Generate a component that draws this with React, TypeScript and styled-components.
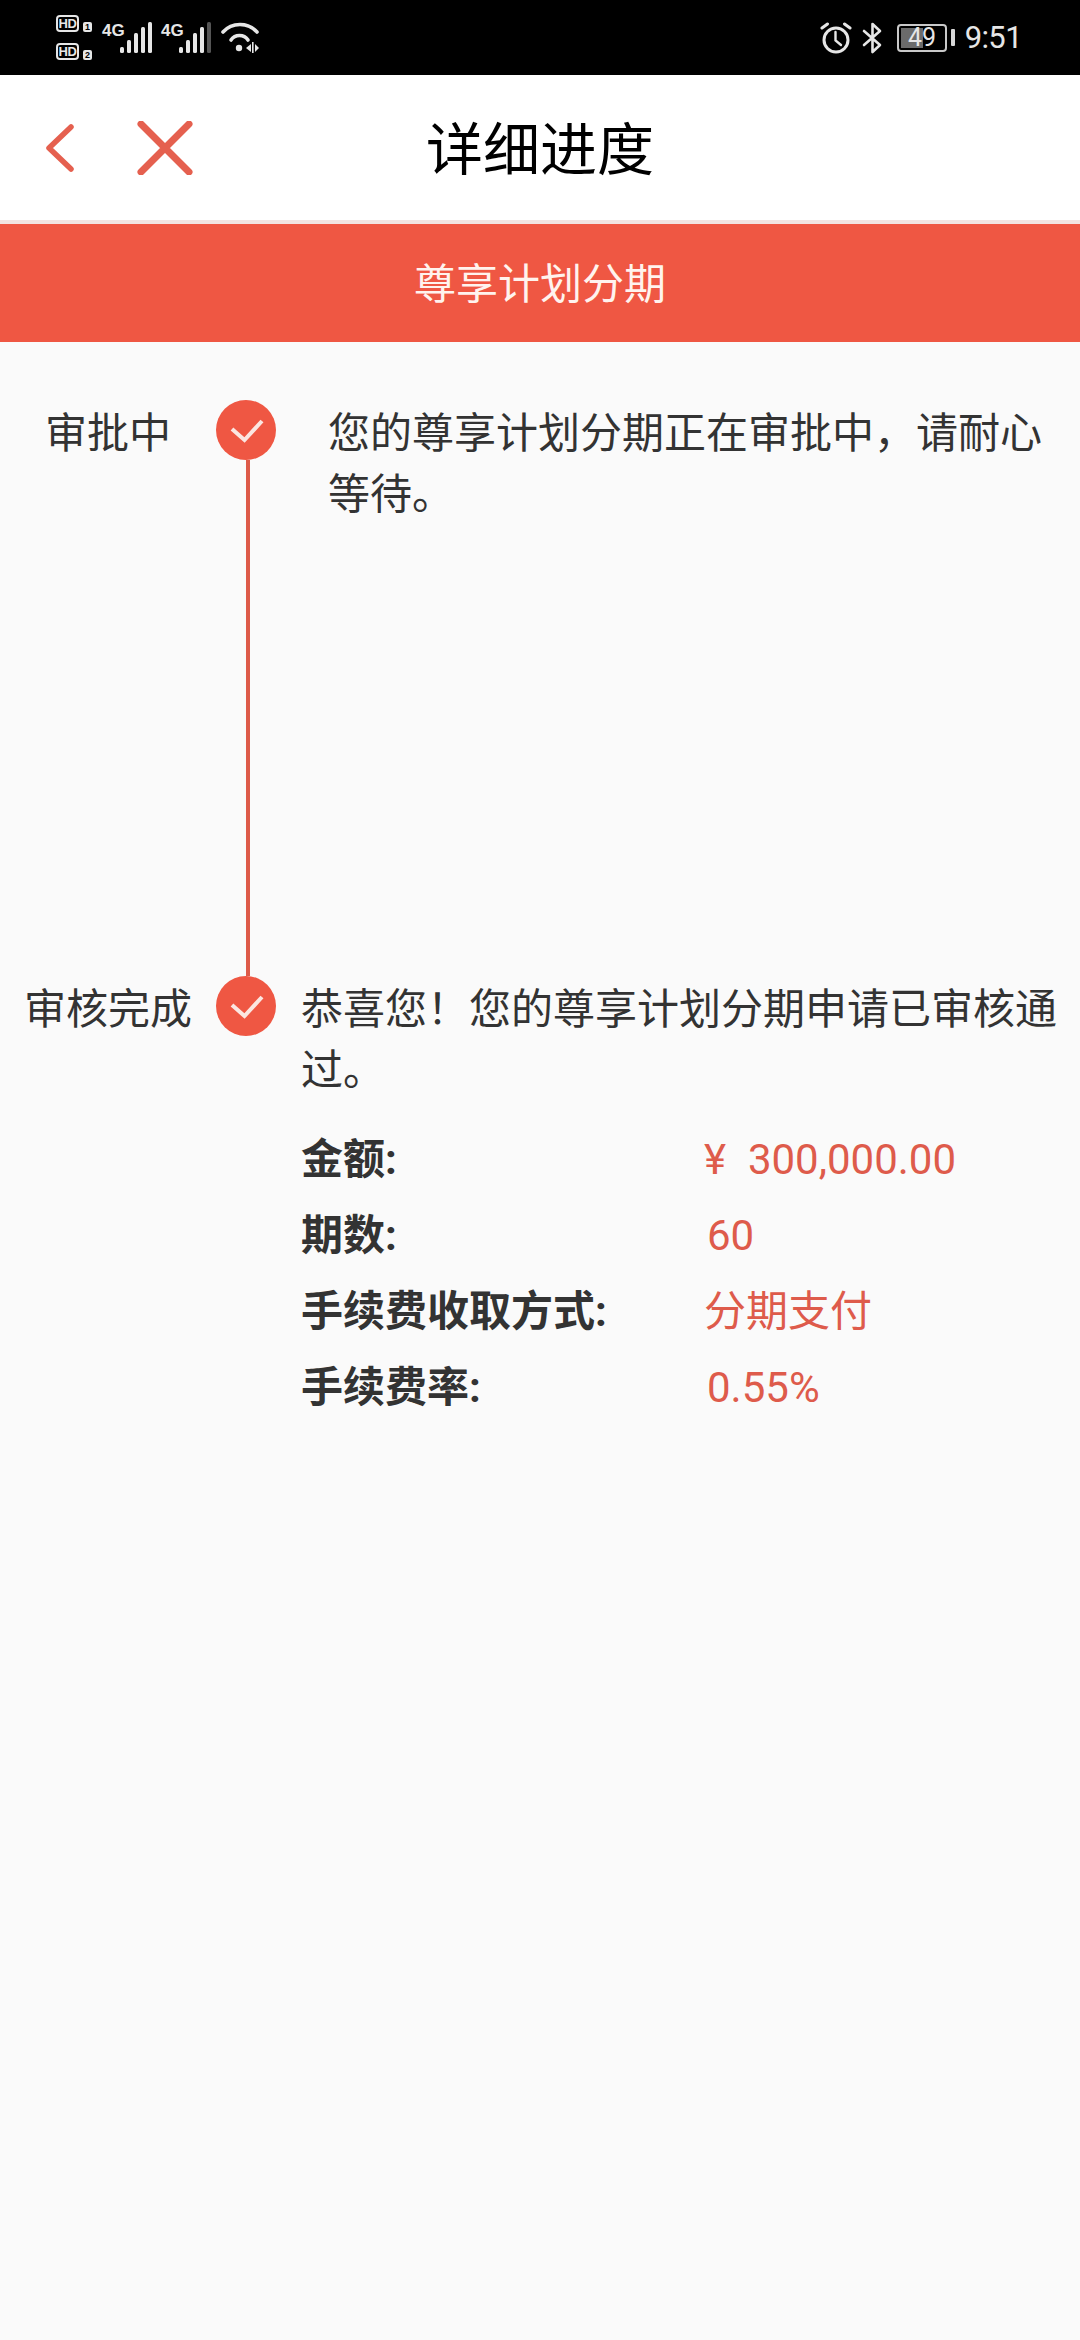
import React from "react";
import styled, { createGlobalStyle } from "styled-components";

const Global = createGlobalStyle`
  html, body { margin: 0; padding: 0; background: #fafafa; }
  body { font-family: Roboto, "Noto Sans CJK SC", sans-serif; }
  * { box-sizing: border-box; }
`;

const Page = styled.div`
  width: 1080px;
  height: 2340px;
  background: #fafafa;
  display: flex;
  flex-direction: column;
  overflow: hidden;
`;

const StatusBar = styled.div`
  height: 75px;
  background: #000;
  color: #e6e6e6;
  display: flex;
  align-items: center;
  justify-content: space-between;
  padding: 0 58px 0 56px;
`;

const StatusGroup = styled.div`
  display: flex;
  align-items: center;
`;

const SimStack = styled.div`
  display: flex;
  flex-direction: column;
  gap: 11px;
  margin-top: -1px;
`;

const SimRow = styled.div`
  display: flex;
  align-items: flex-end;
  gap: 4px;
`;

const HdBadge = styled.span`
  width: 23px;
  height: 17px;
  border: 2px solid #e6e6e6;
  border-radius: 4px;
  font: 700 13px/13px "Liberation Sans", sans-serif;
  letter-spacing: -0.5px;
  display: flex;
  align-items: center;
  justify-content: center;
`;

const SimNumber = styled.span`
  width: 9px;
  height: 10px;
  background: #e6e6e6;
  color: #000;
  border-radius: 2px;
  font: 700 9px/10px "Liberation Sans", sans-serif;
  text-align: center;
`;

const Network = styled.div<{ $gap: number }>`
  display: flex;
  align-items: flex-start;
  height: 32px;
  margin-left: ${(p) => p.$gap}px;
`;

const NetworkLabel = styled.span`
  width: 17px;
  font: 700 17px/17px "Liberation Sans Narrow", "Liberation Sans", sans-serif;
`;

const WifiIcon = styled.svg`
  margin-left: 9px;
  display: block;
`;

const AlarmIcon = styled.svg`
  display: block;
`;

const BluetoothIcon = styled.svg`
  display: block;
  margin-left: 10px;
`;

const Battery = styled.div`
  width: 50px;
  height: 28px;
  margin-left: 14px;
  border: 2px solid #c9c9c9;
  border-radius: 4px;
  position: relative;
  font: 400 25px/24px Roboto, sans-serif;
  text-align: center;
  padding-left: 1px;
`;

const BatteryFill = styled.span`
  position: absolute;
  left: 2px;
  top: 2px;
  bottom: 2px;
  width: 22px;
  background: #6b6b6b;
`;

const BatteryValue = styled.span`
  position: relative;
`;

const BatteryNub = styled.span`
  width: 4px;
  height: 17px;
  background: #d8d8d8;
  border-radius: 1px;
  margin-left: 4px;
`;

const Clock = styled.span`
  font: 400 31px/40px Roboto, sans-serif;
  margin-left: 10px;
  letter-spacing: -0.6px;
`;

const NavBar = styled.div`
  height: 145px;
  background: #fff;
  display: grid;
  grid-template-columns: 1fr auto 1fr;
  align-items: center;
`;

const NavIcons = styled.div`
  display: flex;
  align-items: center;
  gap: 61px;
  padding-left: 44px;
`;

const NavIcon = styled.svg`
  display: block;
  fill: none;
  stroke: #e5604f;
  stroke-linecap: round;
  stroke-linejoin: round;
`;

const NavTitle = styled.div`
  font-size: 57px;
  line-height: 70px;
  color: #000;
  text-align: center;
  font-weight: 400;
  padding-top: 6px;
`;

const Divider = styled.div`
  height: 4px;
  background: #f3e4e1;
`;

const Banner = styled.div`
  height: 118px;
  background: #ef5743;
  color: #fff3ee;
  font-size: 42px;
  display: flex;
  align-items: center;
  justify-content: center;
  padding-bottom: 5px;
`;

const Timeline = styled.div`
  padding-top: 58px;
  display: flex;
  flex-direction: column;
`;

const Step = styled.div<{ $height?: number }>`
  display: grid;
  grid-template-columns: 216px 60px 1fr;
  min-height: ${(p) => p.$height ?? 0}px;
`;

const StepLabel = styled.div`
  font-size: 42px;
  line-height: 61px;
  color: #333;
  text-align: center;
  padding-top: 3px;
  white-space: nowrap;
`;

const MarkerColumn = styled.div`
  display: flex;
  flex-direction: column;
  align-items: center;
`;

const Marker = styled.svg`
  display: block;
  flex: none;
`;

const Connector = styled.div`
  width: 4px;
  flex: 1;
  margin-left: 3px;
  background: #dd5a48;
`;

const StepBody = styled.div<{ $indent: number }>`
  padding-left: ${(p) => p.$indent}px;
  padding-top: 3px;
`;

const StepText = styled.div<{ $width: number }>`
  width: ${(p) => p.$width}px;
  font-size: 42px;
  line-height: 61px;
  color: #333;
`;

const Details = styled.div`
  margin-top: 21px;
`;

const DetailRow = styled.div`
  display: grid;
  grid-template-columns: 403px 1fr;
  height: 76px;
  align-items: center;
  font-size: 42px;
  line-height: 76px;
`;

const DetailLabel = styled.span`
  color: #333;
  font-weight: 700;
`;

const DetailValue = styled.span<{ $inset?: number }>`
  color: #de5b4b;
  padding-left: ${(p) => p.$inset ?? 0}px;
  word-spacing: 0.5px;
`;

const Signal = ({ weak }: { weak?: boolean }) => (
  <svg width="34" height="32" viewBox="0 0 34 32" style={{ display: "block" }}>
    {[
      [1, 25, 6],
      [8, 18, 13],
      [15, 11, 20],
      [22, 5, 26],
      [29, 0, 31],
    ].map(([x, y, h], i) => (
      <rect
        key={i}
        x={x}
        y={y}
        width="4"
        height={h}
        rx="1.5"
        fill={weak && i === 4 ? "#555" : "#e6e6e6"}
      />
    ))}
  </svg>
);

const Check = () => (
  <Marker width="60" height="60" viewBox="0 0 60 60">
    <circle cx="30" cy="30" r="30" fill="#ef5743" />
    <path
      d="M16 29 L28.5 40 L46 21"
      fill="none"
      stroke="#fbe6e1"
      strokeWidth="4"
    />
  </Marker>
);

export default function App() {
  return (
    <Page>
      <Global />
      <StatusBar>
        <StatusGroup>
          <SimStack>
            <SimRow>
              <HdBadge>HD</HdBadge>
              <SimNumber>1</SimNumber>
            </SimRow>
            <SimRow>
              <HdBadge>HD</HdBadge>
              <SimNumber>2</SimNumber>
            </SimRow>
          </SimStack>
          <Network $gap={10}>
            <NetworkLabel>4G</NetworkLabel>
            <Signal />
          </Network>
          <Network $gap={8}>
            <NetworkLabel>4G</NetworkLabel>
            <Signal weak />
          </Network>
          <WifiIcon width="38" height="32" viewBox="0 0 38 32" fill="none">
            <path d="M2 10 C11 0 27 0 36 10" stroke="#e6e6e6" strokeWidth="3.6" strokeLinecap="round" />
            <path d="M10 18 C14 12 23 12 27 18" stroke="#e6e6e6" strokeWidth="3.6" strokeLinecap="round" />
            <circle cx="18" cy="26" r="3.2" fill="#e6e6e6" />
            <path d="M30 22 L25 26 L30 30 Z" fill="#e6e6e6" />
            <rect x="31" y="20" width="1.6" height="11" fill="#e6e6e6" />
            <path d="M34 22 L38 26 L34 30 Z" fill="#e6e6e6" />
          </WifiIcon>
        </StatusGroup>
        <StatusGroup>
          <AlarmIcon width="32" height="32" viewBox="0 0 32 32" fill="none" stroke="#e6e6e6" strokeLinecap="round">
            <circle cx="16" cy="18" r="12" strokeWidth="3" />
            <path d="M15.5 10 V18.5 L21 23" strokeWidth="2.4" />
            <path d="M2 6 L7.5 2" strokeWidth="3" />
            <path d="M30 6 L24.5 2" strokeWidth="3" />
          </AlarmIcon>
          <BluetoothIcon width="21" height="32" viewBox="0 0 21 32" fill="none" stroke="#e6e6e6" strokeWidth="2.6" strokeLinejoin="round" strokeLinecap="round">
            <path d="M2 9 L18 23 L10.5 30 V2 L18 9 L2 23" />
          </BluetoothIcon>
          <Battery>
            <BatteryFill />
            <BatteryValue>49</BatteryValue>
          </Battery>
          <BatteryNub />
          <Clock>9:51</Clock>
        </StatusGroup>
      </StatusBar>

      <NavBar>
        <NavIcons>
          <NavIcon width="32" height="50" viewBox="0 0 32 50" strokeWidth="5.5">
            <path d="M27 4 L5 25 L27 46" />
          </NavIcon>
          <NavIcon width="56" height="54" viewBox="0 0 56 54" strokeWidth="7">
            <path d="M4 3 L52 51 M52 3 L4 51" />
          </NavIcon>
        </NavIcons>
        <NavTitle>详细进度</NavTitle>
      </NavBar>
      <Divider />
      <Banner>尊享计划分期</Banner>

      <Timeline>
        <Step $height={576}>
          <StepLabel>审批中</StepLabel>
          <MarkerColumn>
            <Check />
            <Connector />
          </MarkerColumn>
          <StepBody $indent={52}>
            <StepText $width={720}>您的尊享计划分期正在审批中，请耐心等待。</StepText>
          </StepBody>
        </Step>
        <Step>
          <StepLabel>审核完成</StepLabel>
          <MarkerColumn>
            <Check />
          </MarkerColumn>
          <StepBody $indent={25}>
            <StepText $width={760}>恭喜您！您的尊享计划分期申请已审核通过。</StepText>
            <Details>
              <DetailRow>
                <DetailLabel>金额:</DetailLabel>
                <DetailValue>¥&nbsp;&nbsp;300,000.00</DetailValue>
              </DetailRow>
              <DetailRow>
                <DetailLabel>期数:</DetailLabel>
                <DetailValue $inset={3}>60</DetailValue>
              </DetailRow>
              <DetailRow>
                <DetailLabel>手续费收取方式:</DetailLabel>
                <DetailValue>分期支付</DetailValue>
              </DetailRow>
              <DetailRow>
                <DetailLabel>手续费率:</DetailLabel>
                <DetailValue $inset={3}>0.55%</DetailValue>
              </DetailRow>
            </Details>
          </StepBody>
        </Step>
      </Timeline>
    </Page>
  );
}
